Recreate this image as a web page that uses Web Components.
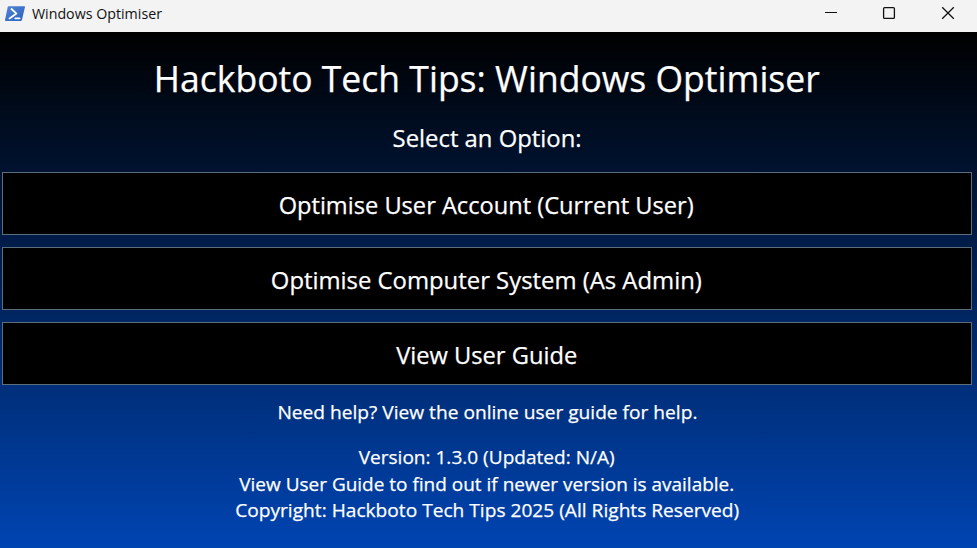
<!DOCTYPE html>
<html lang="en">
<head>
<meta charset="utf-8">
<title>Windows Optimiser</title>
<style>
html, body { margin: 0; height: 100%; overflow: hidden; font-family: "Open Sans", "Noto Sans", sans-serif; }
</style>
</head>
<body>
<app-window></app-window>
<script>
function define(name, html, ready) {
  const t = document.createElement('template');
  t.innerHTML = html;
  customElements.define(name, class extends HTMLElement {
    connectedCallback() {
      if (this.shadowRoot) return;
      this.attachShadow({ mode: 'open' }).append(t.content.cloneNode(true));
      if (ready) ready(this);
    }
  });
}

// A single line of text condensed horizontally to the width in its "w" attribute.
define('fit-text', `
<style>
:host { display: flex; justify-content: center; white-space: nowrap; }
span { display: inline-block; transform-origin: center; }
</style><span><slot></slot></span>`, el => {
  const s = el.shadowRoot.querySelector('span');
  const w = parseFloat(el.getAttribute('w'));
  s.style.transform = 'scaleX(' + w / s.getBoundingClientRect().width + ')';
});

define('option-button', `
<style>
:host { display: block; height: 63px; }
button { display: flex; align-items: center; justify-content: center; box-sizing: border-box; width: 100%; height: 100%;
  margin: 0; padding: 2px 1px 0 0; border: 1px solid #5b6e7c; border-radius: 0; background: #000; color: #fff; font: inherit; }
</style><button><slot></slot></button>`);

define('title-bar', `
<style>
:host { display: flex; align-items: center; height: 32px; flex: none; background: #f3f3f3; color: #111; }
.icon { margin: 0 0 5px 4px; width: 22px; height: 17px; flex: none; }
.name { margin: 0 auto 4px 6px; font-size: 14px; line-height: 20px; width: 130px; }
.controls { display: flex; height: 27px; align-self: flex-start; padding-right: 1px; }
.controls svg { display: block; width: 58px; height: 27px; }
</style>
<svg class="icon" viewBox="0 0 22 17">
  <defs><linearGradient id="g" x1="0" y1="0" x2="1" y2="1"><stop offset="0" stop-color="#5284d8"/><stop offset="1" stop-color="#2b62bd"/></linearGradient></defs>
  <path d="M4.6 1.2H20.2Q21.2 1.2 21 2.1L17.9 15Q17.6 16 16.6 16H1.7Q.8 16 1 15L3.7 2Q3.9 1.2 4.6 1.2Z" fill="url(#g)"/>
  <path d="M7.5 4L12.5 8.6L5.5 13.4M11.3 13.3H15.6" fill="none" stroke="#fff" stroke-width="1.8" stroke-linecap="round" stroke-linejoin="round"/>
</svg>
<fit-text class="name" w="130"><slot></slot></fit-text>
<div class="controls">
  <svg viewBox="0 0 58 27"><path d="M23 12.5H35" stroke="#111"/></svg>
  <svg viewBox="0 0 58 27"><rect x="23.6" y="7.6" width="10.8" height="10.8" rx="1" fill="none" stroke="#111" stroke-width="1.3"/></svg>
  <svg viewBox="0 0 58 27"><path d="M24.2 7.2L35.8 18.8M35.8 7.2L24.2 18.8" stroke="#111" stroke-width="1.3"/></svg>
</div>`);

define('app-window', `
<style>
:host { display: flex; flex-direction: column; width: 977px; height: 548px; }
main { flex: 1; display: flex; flex-direction: column; box-sizing: border-box; padding: 19px 5px 0 2px;
  color: #fff; background: linear-gradient(#000, #0044b2); -webkit-text-stroke: .25px #fff; }
.title { font-size: 37px; line-height: 54px; }
.sub { font-size: 24.5px; line-height: 34px; margin-top: 16px; }
.options { display: grid; gap: 12px; margin-top: 17px; font-size: 24.5px; line-height: 34px; }
.help, .info { font-size: 19px; line-height: 26.5px; }
.help { margin-top: 13.5px; }
.info { margin-top: 18.5px; line-height: 27px; }
.info fit-text:last-child { line-height: 25px; }
</style>
<title-bar>Windows Optimiser</title-bar>
<main>
  <fit-text class="title" w="666">Hackboto Tech Tips: Windows Optimiser</fit-text>
  <fit-text class="sub" w="189">Select an Option:</fit-text>
  <div class="options">
    <option-button><fit-text w="415">Optimise User Account (Current User)</fit-text></option-button>
    <option-button><fit-text w="431">Optimise Computer System (As Admin)</fit-text></option-button>
    <option-button><fit-text w="181">View User Guide</fit-text></option-button>
  </div>
  <fit-text class="help" w="420">Need help? View the online user guide for help.</fit-text>
  <div class="info">
    <fit-text w="256">Version: 1.3.0 (Updated: N/A)</fit-text>
    <fit-text w="495">View User Guide to find out if newer version is available.</fit-text>
    <fit-text w="504">Copyright: Hackboto Tech Tips 2025 (All Rights Reserved)</fit-text>
  </div>
</main>`);
</script>
</body>
</html>
